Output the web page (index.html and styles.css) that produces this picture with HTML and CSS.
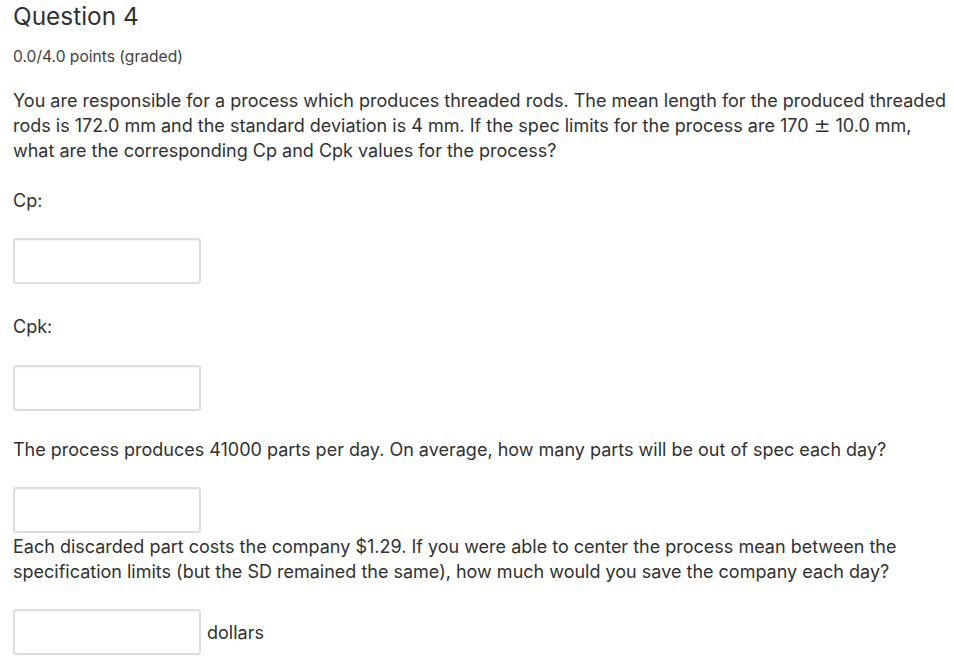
FILE: index.html
```html
<!DOCTYPE html>
<html lang="en">
<head>
<meta charset="utf-8">
<title>Question 4</title>
<link rel="stylesheet" href="styles.css">
</head>
<body>
<div class="problem">
  <h2 class="title">Question 4</h2>
  <div class="points">0.0/4.0 points (graded)</div>
  <p class="text intro">You are responsible for a process which produces threaded rods. The mean length for the produced threaded rods is 172.0 mm and the standard deviation is 4 mm. If the spec limits for the process are 170 <span class="pm">±</span> 10.0 mm, what are the corresponding Cp and Cpk values for the process?</p>
  <p class="text label-first">Cp:</p>
  <div class="field"><input class="input" type="text"></div>
  <p class="text after-input">Cpk:</p>
  <div class="field field-b"><input class="input" type="text"></div>
  <p class="text after-input-b">The process produces 41000 parts per day. On average, how many parts will be out of spec each day?</p>
  <div class="field"><input class="input" type="text"></div>
  <p class="text tight">Each discarded part costs the company $1.29. If you were able to center the process mean between the specification limits (but the SD remained the same), how much would you save the company each day?</p>
  <div class="field"><input class="input" type="text"><span class="unit">dollars</span></div>
</div>
</body>
</html>
```
FILE: styles.css
```css
html, body {
  margin: 0;
  padding: 0;
  background: #ffffff;
}
body {
  font-family: Inter, "Noto Sans", sans-serif;
  color: #313131;
}
.problem {
  padding: 0 3px 0 13px;
}
.title {
  margin: 0;
  padding-top: 1px;
  font-size: 24.4px;
  font-weight: 400;
  line-height: 30px;
  color: #313131;
}
.points {
  margin-top: 16px;
  font-size: 15.6px;
  line-height: 20px;
  color: #414141;
}
.text {
  margin: 0;
  font-size: 18px;
  line-height: 25px;
}
.intro {
  margin-top: 21px;
}
.label-first {
  margin-top: 25px;
}
.after-input {
  margin-top: 30px;
}
.after-input-b {
  margin-top: 26px;
}
.tight {
  margin-top: 1px;
}
.pm {
  font-family: "DejaVu Sans", sans-serif;
  font-size: 20px;
  line-height: 18px;
}
.field {
  display: flex;
  align-items: center;
  margin-top: 25px;
}
.field-b {
  margin-top: 26px;
}
.input {
  box-sizing: border-box;
  width: 188px;
  height: 46px;
  margin: 0;
  padding: 0 8px;
  border: 2px solid #dddddd;
  border-radius: 3px;
  box-shadow: inset 0 1px 2px rgba(0,0,0,0.06);
  background: #ffffff;
  font: inherit;
}
.unit {
  margin-left: 6px;
  font-size: 18px;
  line-height: 25px;
}
```
